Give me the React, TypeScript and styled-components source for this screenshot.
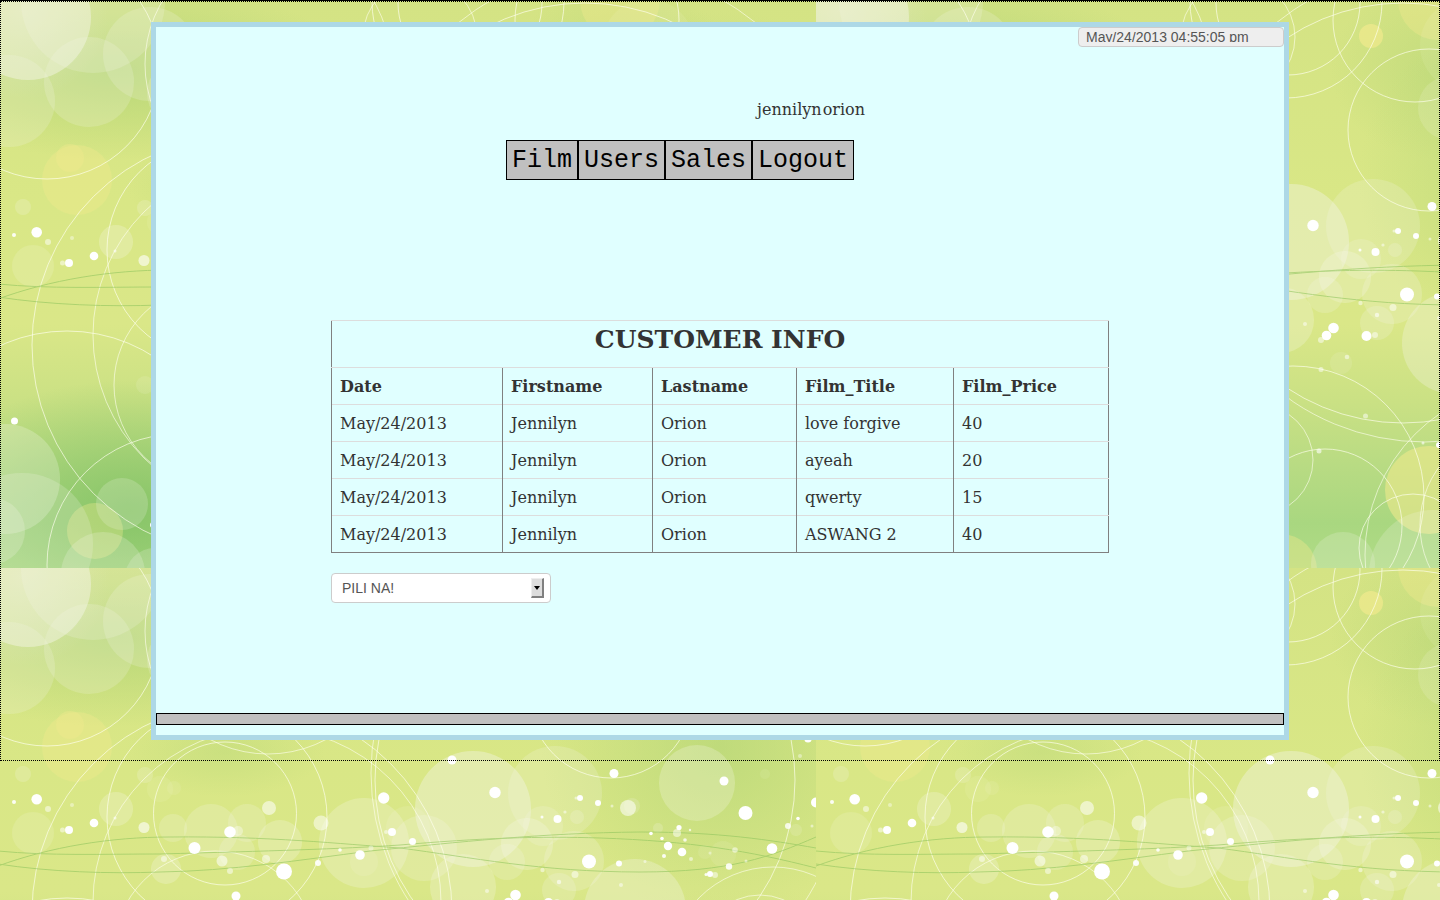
import React from "react";
import styled, { createGlobalStyle } from "styled-components";

const GlobalStyle = createGlobalStyle`
  *, *::before, *::after { box-sizing: border-box; }
  html { background: #d9e786; }
  body {
    margin: 0;
    color: #333;
    font: 16px/20px "DejaVu Serif", serif;
  }
`;

/* ---------- backdrop ---------- */

type Shape = [x: number, y: number, r: number, opacity: number];

const bubbles: Shape[] = [
  [28, 17, 63, 0.45], [93, 1, 72, 0.2], [89, 82, 45, 0.2], [9, 101, 46, 0.2],
  [150, 54, 47, 0.2], [180, 93, 33, 0.2], [23, 207, 8, 0.2], [145, 208, 8, 0.2],
  [160, 222, 13, 0.08], [174, 221, 7, 0.1], [116, 242, 17, 0.25], [33, 266, 21, 0.15],
  [5, 479, 55, 0.25], [22, 544, 71, 0.2], [-8, 531, 33, 0.22], [122, 504, 26, 0.2],
  [103, 574, 42, 0.22], [155, 578, 30, 0.2], [145, 385, 9, 0.12],
  [173, 261, 14, 0.2], [211, 264, 27, 0.22], [247, 256, 19, 0.2], [280, 275, 22, 0.25],
  [237, 285, 18, 0.2], [166, 302, 15, 0.25], [364, 276, 45, 0.25], [364, 295, 14, 0.12],
  [408, 261, 22, 0.12], [424, 281, 33, 0.22], [473, 242, 58, 0.38], [555, 226, 47, 0.2],
  [543, 259, 20, 0.18], [527, 277, 26, 0.25], [574, 294, 30, 0.22], [507, 295, 18, 0.2],
  [697, 216, 38, 0.25], [635, 343, 51, 0.3], [463, 320, 33, 0.25], [559, 323, 17, 0.2],
  [523, 363, 11, 0.12], [632, 239, 8, 0.18], [577, 250, 7, 0.2], [723, 287, 13, 0.1],
  [632, 108, 32, 0.15], [648, 45, 46, 0.08], [525, 564, 32, 0.2], [615, 574, 64, 0.2],
  [765, 207, 5, 0.08], [658, 261, 5, 0.2], [705, 285, 7, 0.1], [796, 263, 6, 0.15],
];

const dots: Shape[] = [
  [36.7, 232.3, 5.3, 1], [14, 235, 2, 0.9], [48, 242, 3, 0.5], [72, 238, 2, 0.4],
  [69, 263, 4, 1], [62.5, 263, 2.5, 0.5], [94, 256, 4.3, 1], [115, 251, 1.5, 0.6],
  [144, 260.5, 5.5, 0.6], [14.5, 421, 3.5, 1], [153, 525, 3, 1],
  [269, 241, 7, 0.55], [321, 256, 7.5, 0.5], [383.7, 231, 5.7, 1], [452, 193, 4.5, 1],
  [495, 225.5, 5.7, 1], [230, 265, 5.8, 1], [238, 264, 5, 0.35], [194.5, 281, 6, 1],
  [284, 304.5, 8, 1], [222, 294, 5.5, 0.55], [164, 292, 3, 0.5], [266, 292, 4, 0.5],
  [230, 304, 3, 0.5], [318, 296, 3, 0.9], [236, 329, 4.5, 1], [360, 288, 4.8, 1],
  [340, 283, 1.8, 0.9], [371, 281, 2.5, 0.4], [392, 265, 4, 1], [386, 265, 2, 0.5],
  [412.5, 274.5, 3.5, 1], [614, 206.5, 4.5, 1], [580, 231, 3, 1], [576, 231, 1.5, 0.5],
  [598, 236, 3, 1], [612, 239, 1.5, 0.5], [557.5, 252, 4, 1], [542, 250, 1.5, 0.9],
  [565, 245, 1.6, 0.5], [724, 214, 4.5, 1], [745.5, 246, 7, 1], [589, 294.5, 7, 1],
  [619, 296.5, 3, 1], [575, 307.5, 3.5, 0.5], [542.5, 303, 2.2, 0.5], [559, 315, 2.2, 0.6],
  [515.5, 328, 5.3, 1], [508.5, 335.5, 4.8, 1], [503, 340, 3, 0.5], [548.5, 336, 5, 1],
  [557, 335, 3, 0.5], [487, 324, 2, 0.5], [529, 357, 2.3, 0.5], [503, 369.5, 2.5, 0.5],
  [547.5, 416, 2.5, 0.5], [605, 443, 1.5, 0.6], [621, 445, 3, 1], [501, 451, 2.5, 0.6],
  [628, 241, 8, 0.55], [679, 260.5, 2.6, 1], [677, 266, 4, 0.5], [651, 266.5, 1.8, 1],
  [662, 271.5, 1.8, 1], [685, 273, 1.8, 0.8], [668, 279, 4.2, 1], [682, 285, 4.3, 1],
  [664, 289, 2, 0.9], [691, 292, 2, 0.5], [735, 283, 2.8, 0.5], [772, 281.5, 5.3, 1],
  [729, 299.5, 3.2, 0.9], [710, 307, 3, 1], [715, 308, 3, 0.5], [706, 307.5, 1.5, 0.9],
  [788, 259, 3, 0.8], [798, 251.5, 1.8, 1], [816, 235.5, 5, 1], [808, 172, 3.6, 1],
  [800, 189, 2, 0.4], [812, 259, 1.5, 0.5], [645, 294.5, 1.5, 0.5], [621, 318, 2, 0.5],
  [746, 294, 1.5, 0.5], [690, 263, 1.2, 0.7], [710, 286, 1.5, 0.4],
];

const rings: Shape[] = [
  [47, 66, 113, 0.65], [242, 345, 210, 0.65], [217, 250, 110, 0.65], [267, 335, 174, 0.6],
  [225, 246.5, 71.5, 0.65], [268, 64, 123, 0.6], [607, 206, 236, 0.6], [67, 491, 160, 0.65],
  [178, 565, 131, 0.65], [215, 385, 101, 0.6], [611, 130, 81, 0.65], [585, 213, 210, 0.65],
  [773, 404, 104, 0.6], [760, 388, 60, 0.6], [597, 20, 82, 0.65], [470, 3, 72, 0.65],
  [468, 2, 96, 0.65], [420, 37, 57, 0.6], [475, 497, 131, 0.65], [440, 460, 55, 0.6],
  [507, 526, 77, 0.65], [595, 548, 54, 0.65], [718, 555, 171, 0.6], [700, 525, 98, 0.6],
];

const waves = [
  "M-2 284C50 289 100 287 160 287C270 284 340 282 400 278C480 271 540 269 600 271C690 274 750 284 816 301",
  "M-2 299C50 280 110 270 170 270C270 269 340 277 400 281C470 290 540 305 640 305C730 305 770 290 816 270",
  "M-2 297C50 305 110 307 160 305C230 304 300 293 370 284C460 275 540 266 640 265C720 265 770 273 816 281",
];

const Sky = styled.svg`
  position: fixed;
  inset: 0;
  z-index: -1;
  width: 100%;
  height: 100%;
`;

const tint = (id: string, color: string, opacity: number) => (
  <radialGradient id={id}>
    <stop offset="0" stopColor={color} stopOpacity={opacity} />
    <stop offset="1" stopColor={color} stopOpacity={0} />
  </radialGradient>
);

function Backdrop() {
  return (
    <Sky aria-hidden="true">
      <defs>
        <linearGradient id="base" x1="0" y1="0" x2="0" y2="1">
          <stop offset="0" stopColor="#d4e384" />
          <stop offset="0.35" stopColor="#d9e786" />
          <stop offset="0.57" stopColor="#dae788" />
          <stop offset="0.7" stopColor="#cbe184" />
          <stop offset="0.82" stopColor="#b8db83" />
          <stop offset="0.92" stopColor="#a9d780" />
          <stop offset="1" stopColor="#b0dc86" />
        </linearGradient>
        {tint("shade", "#abd172", 0.7)}
        {tint("deep", "#7fc062", 0.8)}
        {tint("haze", "#e4e8c8", 0.5)}
        <pattern id="tile" x="-2" y="1" width="818" height="567" patternUnits="userSpaceOnUse">
          <g transform="translate(2 -1)">
            <rect x="-2" y="1" width="818" height="567" fill="url(#base)" />
            <ellipse cx="120" cy="70" rx="230" ry="90" fill="url(#shade)" />
            <ellipse cx="225" cy="185" rx="100" ry="45" fill="url(#shade)" opacity="0.45" />
            <ellipse cx="622" cy="70" rx="110" ry="90" fill="url(#shade)" opacity="0.6" />
            <ellipse cx="720" cy="180" rx="180" ry="170" fill="url(#shade)" opacity="0.8" />
            <ellipse cx="130" cy="510" rx="210" ry="130" fill="url(#deep)" />
            <ellipse cx="20" cy="10" rx="90" ry="90" fill="url(#haze)" />
            <g fill="#efe98c">
              <circle cx="77" cy="180" r="35" opacity="0.4" />
              <circle cx="70" cy="158" r="14" opacity="0.4" />
              <circle cx="553" cy="36" r="12" opacity="0.75" />
              <circle cx="620" cy="0" r="40" opacity="0.4" />
              <circle cx="611" cy="490" r="44" opacity="0.6" />
              <circle cx="463" cy="570" r="36" opacity="0.4" />
              <circle cx="95" cy="531" r="28" opacity="0.35" />
            </g>
            <g fill="#f6f6ea">
              {bubbles.map(([x, y, r, o], i) => (
                <circle key={i} cx={x} cy={y} r={r} opacity={o} />
              ))}
            </g>
            <g fill="none" stroke="#fffff0" strokeWidth="1">
              {rings.map(([x, y, r, o], i) => (
                <circle key={i} cx={x} cy={y} r={r} opacity={o} />
              ))}
            </g>
            <g fill="none" stroke="#8fc45c" strokeWidth="1" opacity="0.6">
              {waves.map((d) => (
                <path key={d} d={d} />
              ))}
            </g>
            <g fill="#fff">
              {dots.map(([x, y, r, o], i) => (
                <circle key={i} cx={x} cy={y} r={r} opacity={o} />
              ))}
            </g>
          </g>
        </pattern>
      </defs>
      <rect width="100%" height="100%" fill="url(#tile)" />
    </Sky>
  );
}

/* ---------- page ---------- */

const Page = styled.div`
  border-top: 1px solid #000;
`;

const Frame = styled.div`
  padding: 20px 150px;
  border: 1px dotted #000;
`;

const Panel = styled.main`
  padding-bottom: 10px;
  border: 5px solid lightblue;
  background: lightcyan;
`;

const Header = styled.header`
  display: flex;
  justify-content: flex-end;
`;

const ClockBox = styled.div`
  display: flex;
  width: 206px;
  height: 20px;
  padding: 4px 7px;
  border: 1px solid #ccc;
  border-radius: 4px;
  background: #eee;
`;

/* The field is shorter than its text, so ascenders and descenders are cut. */
const Clock = styled.input`
  width: 100%;
  height: 10px;
  padding: 0;
  border: 0;
  overflow: hidden;
  background: transparent;
  color: #555;
  font: 14px/20px "Liberation Sans", Arial, sans-serif;
`;

const Content = styled.div`
  width: 778px;
  max-width: 100%;
  margin: 0 auto;
  padding: 53px 0 110px;
`;

const UserName = styled.p`
  display: flex;
  gap: 1px;
  margin: 0 0 20px;
  padding-left: 426px;
`;

const Nav = styled.nav`
  display: flex;
  margin: 0 0 140px 175px;
`;

const NavLink = styled.a`
  padding: 6px 5px 4px;
  border: 1px solid #000;
  background: #c0c0c0;
  color: #000;
  font: 25px/28px "Liberation Mono", "Courier New", monospace;
  text-decoration: none;
`;

const Table = styled.table`
  width: 100%;
  margin-bottom: 20px;
  border: 1px solid #808080;
  border-top-color: #ddd;
  border-collapse: collapse;
  table-layout: fixed;
`;

const Col = styled.col<{ $width?: number }>`
  width: ${({ $width }) => ($width ? `${$width}px` : "auto")};
`;

const Row = styled.tr`
  border-top: 1px solid #ddd;
`;

const Title = styled.th`
  padding: 9px 8px 17px;
  font-size: 25px;
  line-height: 20px;
  text-align: center;
`;

const HeadCell = styled.th`
  padding: 9px 8px 7px;
  border-left: 1px solid #808080;
  border-top: 1px solid #ddd;
  text-align: left;
`;

const Cell = styled.td`
  padding: 9px 8px 7px;
  border-left: 1px solid #808080;
  border-top: 1px solid #ddd;
`;

const Picker = styled.div`
  position: relative;
  width: 220px;
`;

const Select = styled.select`
  display: block;
  width: 100%;
  height: 30px;
  padding: 4px 10px;
  border: 1px solid #ccc;
  border-radius: 4px;
  background: #fff;
  color: #555;
  font: 14px/20px "Liberation Sans", Arial, sans-serif;
  appearance: none;
`;

const Arrow = styled.span`
  position: absolute;
  top: 5px;
  right: 7px;
  display: flex;
  align-items: center;
  justify-content: center;
  width: 13px;
  height: 20px;
  border: 1px solid #eee;
  border-right: 2px solid #808080;
  border-bottom: 2px solid #808080;
  background: #ddd;
  pointer-events: none;

  &::before {
    content: "";
    border: 3px solid transparent;
    border-top: 4px solid #000;
    border-bottom: 0;
  }
`;

const FooterBar = styled.footer`
  height: 12px;
  border: 1px solid #000;
  background: #c0c0c0;
`;

const links = ["Film", "Users", "Sales", "Logout"];
const columns = ["Date", "Firstname", "Lastname", "Film_Title", "Film_Price"];
const columnWidths = [171, 150, 144, 157, undefined];
const sales = [
  ["May/24/2013", "Jennilyn", "Orion", "love forgive", "40"],
  ["May/24/2013", "Jennilyn", "Orion", "ayeah", "20"],
  ["May/24/2013", "Jennilyn", "Orion", "qwerty", "15"],
  ["May/24/2013", "Jennilyn", "Orion", "ASWANG 2", "40"],
];

export default function App() {
  return (
    <Page>
      <GlobalStyle />
      <Backdrop />
      <Frame>
        <Panel>
          <Header>
            <ClockBox>
              <Clock aria-label="Current time" readOnly value="May/24/2013 04:55:05 pm" />
            </ClockBox>
          </Header>
          <Content>
            <UserName>
              <span>jennilyn</span>
              <span>orion</span>
            </UserName>
            <Nav>
              {links.map((label) => (
                <NavLink key={label} href={`#${label.toLowerCase()}`}>
                  {label}
                </NavLink>
              ))}
            </Nav>
            <Table>
              <colgroup>
                {columnWidths.map((width, i) => (
                  <Col key={i} $width={width} />
                ))}
              </colgroup>
              <thead>
                <Row>
                  <Title colSpan={5}>CUSTOMER INFO</Title>
                </Row>
                <Row>
                  {columns.map((name) => (
                    <HeadCell key={name} scope="col">
                      {name}
                    </HeadCell>
                  ))}
                </Row>
              </thead>
              <tbody>
                {sales.map((sale, i) => (
                  <Row key={i}>
                    {sale.map((value, j) => (
                      <Cell key={j}>{value}</Cell>
                    ))}
                  </Row>
                ))}
              </tbody>
            </Table>
            <Picker>
              <Select aria-label="Selection" defaultValue="">
                <option value="">PILI NA!</option>
              </Select>
              <Arrow />
            </Picker>
          </Content>
          <FooterBar />
        </Panel>
      </Frame>
    </Page>
  );
}
